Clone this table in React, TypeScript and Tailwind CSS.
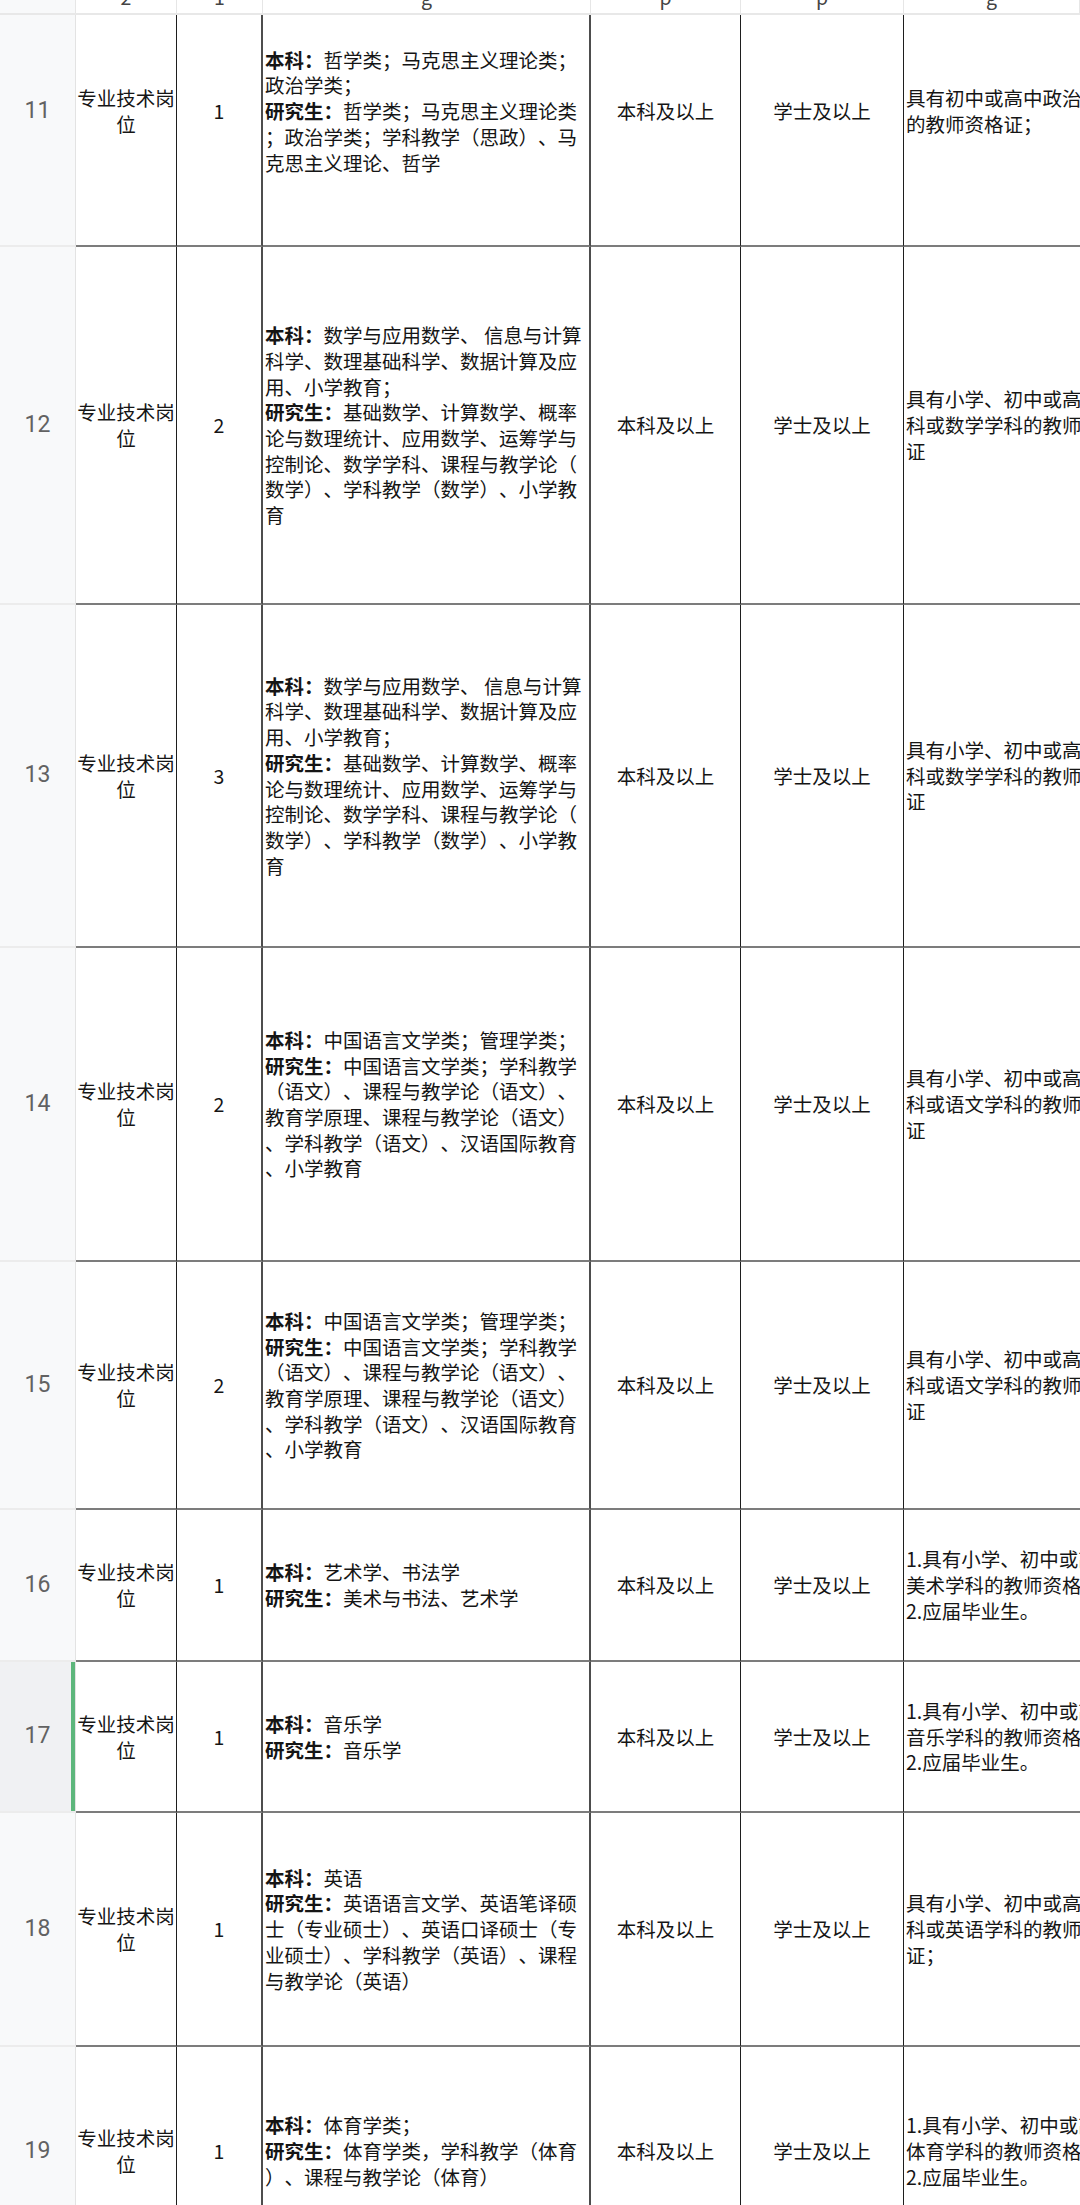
import type { ReactNode } from "react";

type Row = {
  no: number;
  h: string;
  pad?: string;
  count: string;
  major: string[];
  req: string[];
  active?: boolean;
};

const mathMajor = [
  "本科：数学与应用数学、 信息与计算",
  "科学、数理基础科学、数据计算及应",
  "用、小学教育；",
  "研究生：基础数学、计算数学、概率",
  "论与数理统计、应用数学、运筹学与",
  "控制论、数学学科、课程与教学论（",
  "数学）、学科教学（数学）、小学教",
  "育",
];

const chineseMajor = [
  "本科：中国语言文学类；管理学类；",
  "研究生：中国语言文学类；学科教学",
  "（语文）、课程与教学论（语文）、",
  "教育学原理、课程与教学论（语文）",
  "、学科教学（语文）、汉语国际教育",
  "、小学教育",
];

const rows: Row[] = [
  {
    no: 11,
    h: "h-[232px]",
    pad: "pb-[38px]",
    count: "1",
    major: [
      "本科：哲学类；马克思主义理论类；",
      "政治学类；",
      "研究生：哲学类；马克思主义理论类",
      "；政治学类；学科教学（思政）、马",
      "克思主义理论、哲学",
    ],
    req: ["具有初中或高中政治学科", "的教师资格证；"],
  },
  {
    no: 12,
    h: "h-[358px]",
    count: "2",
    major: mathMajor,
    req: ["具有小学、初中或高中数学学", "科或数学学科的教师资格", "证"],
  },
  {
    no: 13,
    h: "h-[343px]",
    count: "3",
    major: mathMajor,
    req: ["具有小学、初中或高中数学学", "科或数学学科的教师资格", "证"],
  },
  {
    no: 14,
    h: "h-[314px]",
    count: "2",
    major: chineseMajor,
    req: ["具有小学、初中或高中语文学", "科或语文学科的教师资格", "证"],
  },
  {
    no: 15,
    h: "h-[248px]",
    count: "2",
    major: chineseMajor,
    req: ["具有小学、初中或高中语文学", "科或语文学科的教师资格", "证"],
  },
  {
    no: 16,
    h: "h-[152px]",
    count: "1",
    major: ["本科：艺术学、书法学", "研究生：美术与书法、艺术学"],
    req: ["1.具有小学、初中或高中", "美术学科的教师资格证；", "2.应届毕业生。"],
  },
  {
    no: 17,
    h: "h-[151px]",
    count: "1",
    active: true,
    major: ["本科：音乐学", "研究生：音乐学"],
    req: ["1.具有小学、初中或高中", "音乐学科的教师资格证；", "2.应届毕业生。"],
  },
  {
    no: 18,
    h: "h-[234px]",
    count: "1",
    major: [
      "本科：英语",
      "研究生：英语语言文学、英语笔译硕",
      "士（专业硕士）、英语口译硕士（专",
      "业硕士）、学科教学（英语）、课程",
      "与教学论（英语）",
    ],
    req: ["具有小学、初中或高中英语学", "科或英语学科的教师资格", "证；"],
  },
  {
    no: 19,
    h: "h-[210px]",
    count: "1",
    major: [
      "本科：体育学类；",
      "研究生：体育学类，学科教学（体育",
      "）、课程与教学论（体育）",
    ],
    req: ["1.具有小学、初中或高中", "体育学科的教师资格证；", "2.应届毕业生。"],
  },
];

const Line = ({ text }: { text: string }) => {
  const m = text.match(/^(本科：|研究生：)(.*)$/);
  if (!m) return <div className="whitespace-pre">{text}</div>;
  return (
    <div className="whitespace-pre">
      <span className="font-bold">{m[1]}</span>
      {m[2]}
    </div>
  );
};

const Cell = ({ className, children }: { className: string; children: ReactNode }) => (
  <div className={`flex items-center border-b-2 border-b-[#7c7c7c] ${className}`}>{children}</div>
);

const Frag = ({ className, text }: { className: string; text: string }) => (
  <div className={`h-full overflow-hidden border-r border-r-[#e6e6e6] flex justify-center ${className}`}>
    <span className="-mt-[15px] text-[19.5px] leading-[24px] text-[#444]">{text}</span>
  </div>
);

export default function App() {
  return (
    <div className="w-[1080px] h-[2205px] overflow-hidden bg-white text-[#151515] [text-spacing-trim:space-all] font-['Noto_Sans_CJK_SC','Noto_Sans',sans-serif]">
      {/* frozen strip */}
      <div className="flex h-[15px] border-b-2 border-b-[#e8e8e8]">
        <div className="w-[76px] shrink-0 h-full border-r border-r-[#e6e6e6] bg-[#f8f9fa]" />
        <Frag className="w-[101px] shrink-0" text="2" />
        <Frag className="w-[86px] shrink-0" text="1" />
        <Frag className="w-[328px] shrink-0" text="g" />
        <Frag className="w-[150px] shrink-0" text="p" />
        <Frag className="w-[163px] shrink-0" text="p" />
        <Frag className="flex-1 min-w-0" text="g" />
      </div>

      {rows.map((r) => (
        <div key={r.no} className={`flex ${r.h}`}>
          <div
            className={`relative w-[76px] shrink-0 flex items-center justify-center border-r border-r-[#e3e3e3] border-b-2 border-b-[#ececec] font-['Roboto',sans-serif] text-[23px] text-[#626262] ${
              r.active ? "bg-[#f0f1f3]" : "bg-[#f8f9fa]"
            } ${r.pad ?? ""}`}
          >
            {r.no}
            {r.active && <div className="absolute right-0 top-0 bottom-0 w-[4px] bg-[#5db67c]" />}
          </div>

          <Cell className={`w-[101px] shrink-0 justify-center text-center border-r border-r-[#1e1e1e] text-[19.5px] leading-[25.7px] ${r.pad ?? ""}`}>
            <div className="whitespace-nowrap">
              专业技术岗
              <br />位
            </div>
          </Cell>

          <Cell className={`w-[86px] shrink-0 justify-center border-r-2 border-r-[#4d4d4d] text-[19.5px] ${r.pad ?? ""}`}>
            {r.count}
          </Cell>

          <Cell className={`w-[328px] shrink-0 pl-[2px] border-r-2 border-r-[#4d4d4d] text-[19.5px] leading-[25.7px] ${r.pad ?? ""}`}>
            <div>
              {r.major.map((t, i) => (
                <Line key={i} text={t} />
              ))}
            </div>
          </Cell>

          <Cell className={`w-[150px] shrink-0 justify-center border-r border-r-[#1e1e1e] text-[19.5px] ${r.pad ?? ""}`}>
            本科及以上
          </Cell>

          <Cell className={`w-[163px] shrink-0 justify-center border-r border-r-[#1e1e1e] text-[19.5px] ${r.pad ?? ""}`}>
            学士及以上
          </Cell>

          <Cell className={`flex-1 min-w-0 overflow-hidden pl-[2px] text-[19.5px] leading-[25.7px] ${r.pad ?? ""}`}>
            <div>
              {r.req.map((t, i) => (
                <div key={i} className="whitespace-nowrap">
                  {t}
                </div>
              ))}
            </div>
          </Cell>
        </div>
      ))}
    </div>
  );
}
